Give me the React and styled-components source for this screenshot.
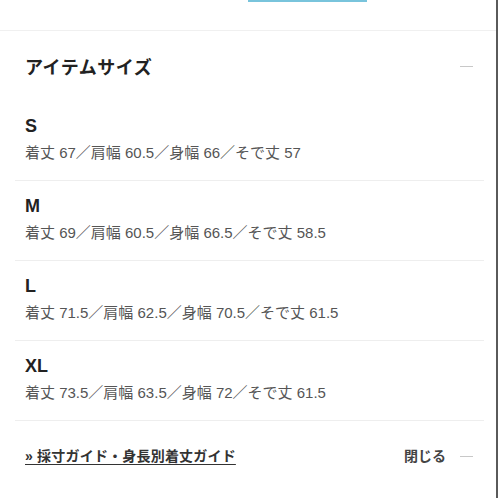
import React from "react";
import styled, { createGlobalStyle } from "styled-components";

const Global = createGlobalStyle`
  html, body { margin: 0; padding: 0; background: #fff; }
  body { font-family: "Liberation Sans", "Noto Sans CJK JP", sans-serif; }
`;

const Panel = styled.div`
  width: 498px;
  height: 498px;
  box-sizing: border-box;
  border-right: 2px solid #5a5a5a;
  background: #fff;
  overflow: hidden;
  display: flex;
  flex-direction: column;
`;

const TopBar = styled.div`
  height: 30px;
  border-bottom: 1px solid #f0f0f0;
  padding-left: 248px;
  display: flex;
  align-items: flex-start;
`;

const TabLine = styled.div`
  width: 119px;
  height: 2px;
  background: #79c4dc;
`;

const Header = styled.div`
  height: 70px;
  padding: 0 23px 0 25px;
  display: flex;
  align-items: center;
  justify-content: space-between;
`;

const Title = styled.h2`
  margin: 0 0 1px 0;
  font-family: "Noto Sans CJK JP", sans-serif;
  font-size: 18px;
  font-weight: 700;
  color: #222;
  letter-spacing: 0.5px;
`;

const Minus = styled.span`
  display: block;
  width: 13px;
  height: 1px;
  background: #c8c8c8;
`;

const List = styled.div`
  display: flex;
  flex-direction: column;
`;

const Item = styled.div`
  margin: 0 12px 0 15px;
  padding: 14px 0 17px 10px;
  border-bottom: 1px solid #eeeeee;
  display: flex;
  flex-direction: column;
  gap: 6px;
`;

const Label = styled.div`
  font-size: 18px;
  line-height: 22px;
  font-weight: 700;
  color: #222;
`;

const Spec = styled.div`
  font-size: 15px;
  line-height: 20px;
  color: #555;
`;

const Footer = styled.div`
  padding: 25px 23px 0 25px;
  display: flex;
  align-items: center;
  justify-content: space-between;
`;

const GuideLink = styled.a`
  font-size: 14px;
  line-height: 20px;
  font-weight: 700;
  color: #333;
  letter-spacing: 0.2px;
  text-decoration: underline;
  text-underline-offset: 3px;
`;

const Close = styled.div`
  display: flex;
  align-items: center;
  gap: 14px;
  font-size: 14px;
  line-height: 20px;
  font-weight: 700;
  color: #444;
`;

const sizes = [
  { name: "S", spec: "着丈 67／肩幅 60.5／身幅 66／そで丈 57" },
  { name: "M", spec: "着丈 69／肩幅 60.5／身幅 66.5／そで丈 58.5" },
  { name: "L", spec: "着丈 71.5／肩幅 62.5／身幅 70.5／そで丈 61.5" },
  { name: "XL", spec: "着丈 73.5／肩幅 63.5／身幅 72／そで丈 61.5" },
];

export default function App() {
  return (
    <>
      <Global />
      <Panel>
        <TopBar>
          <TabLine />
        </TopBar>
        <Header>
          <Title>アイテムサイズ</Title>
          <Minus />
        </Header>
        <List>
          {sizes.map((s) => (
            <Item key={s.name}>
              <Label>{s.name}</Label>
              <Spec>{s.spec}</Spec>
            </Item>
          ))}
        </List>
        <Footer>
          <GuideLink>» 採寸ガイド・身長別着丈ガイド</GuideLink>
          <Close>
            閉じる
            <Minus />
          </Close>
        </Footer>
      </Panel>
    </>
  );
}
